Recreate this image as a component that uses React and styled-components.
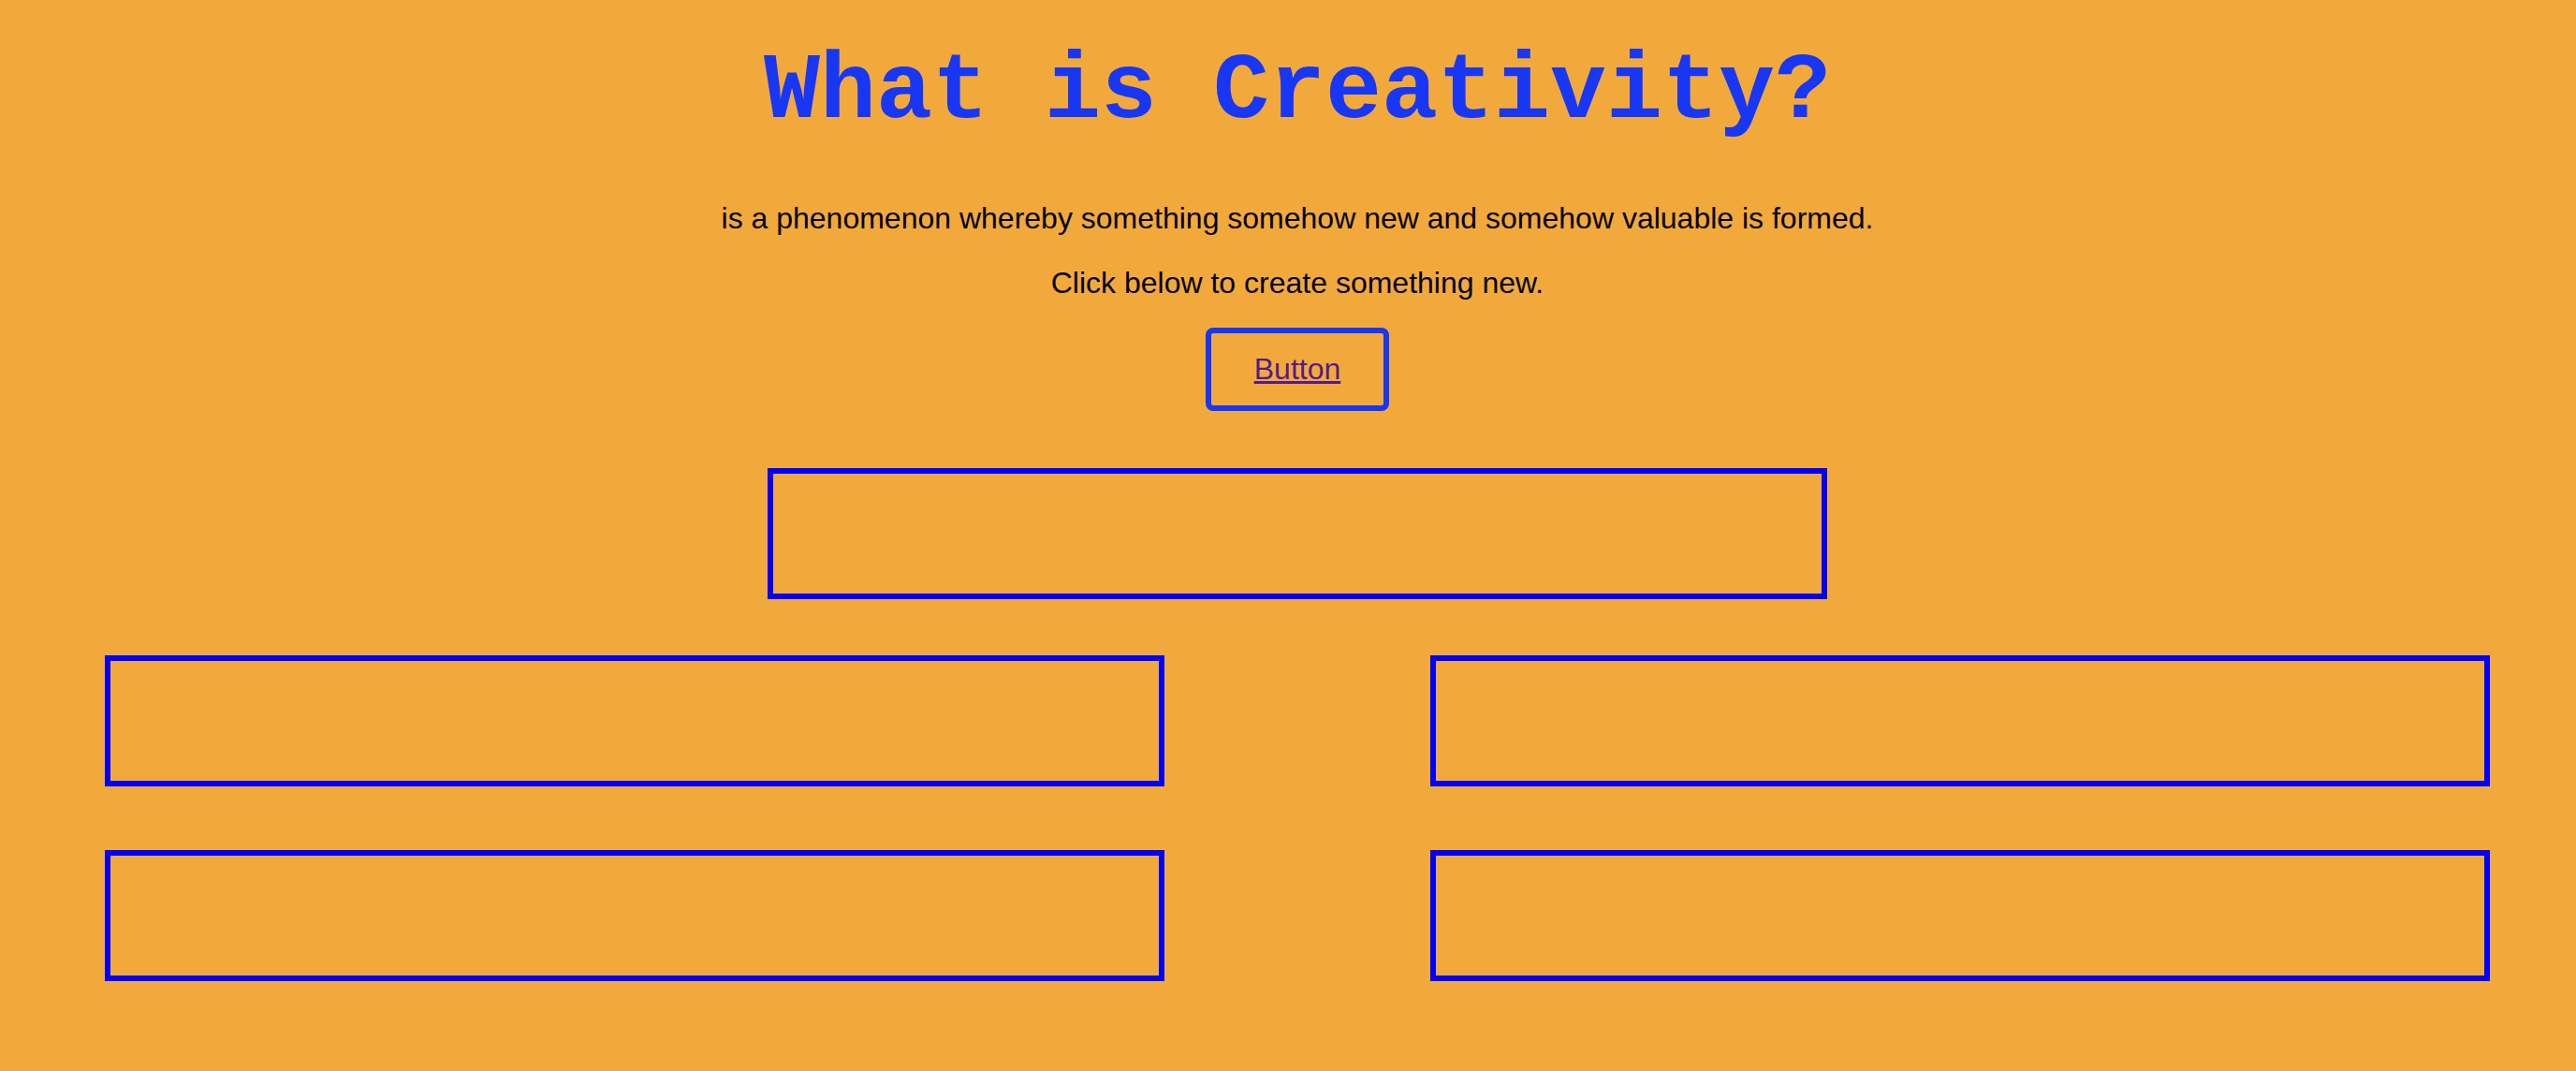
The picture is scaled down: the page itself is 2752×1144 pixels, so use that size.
import React from 'react';
import styled, { createGlobalStyle } from 'styled-components';

const GlobalStyle = createGlobalStyle`
  html, body {
    margin: 0;
    padding: 0;
    background-color: #f2a93c;
  }
`

const Page = styled.div`
  min-height: 1144px;
  background-color: #f2a93c;
  padding-left: 20px;
  box-sizing: border-box;
  text-align: center;
  font-family: "Liberation Sans", Arial, sans-serif;
`

const Title = styled.h1`
  margin: 42px 0 0;
  font-family: "Liberation Mono", "Courier New", monospace;
  font-weight: bold;
  font-size: 100px;
  line-height: 113px;
  color: #1737f5;
`

const Text = styled.p`
  margin: ${props => props.first ? '60px' : '32px'} 0 0;
  font-size: 32px;
  line-height: 37px;
  color: #000;
`

const ButtonLink = styled.a`
  display: inline-block;
  margin-top: 29px;
  padding: 20px 46px;
  border: 6px solid #1737f5;
  border-radius: 8px;
  font-size: 32px;
  line-height: 37px;
  color: #551a8b;
  text-decoration: underline;
  cursor: pointer;
`

const Box = styled.div`
  box-sizing: border-box;
  width: 1132px;
  height: 140px;
  border: 6px solid #0000ff;
`

const TopBox = styled(Box)`
  margin: 61px auto 0;
`

const Grid = styled.div`
  display: grid;
  grid-template-columns: 1132px 1132px;
  column-gap: 284px;
  row-gap: 68px;
  justify-content: center;
  margin-top: 60px;
`

const App = () => {
  return (<>
    <GlobalStyle />
    <Page>
      <Title>What is Creativity?</Title>
      <Text first>is a phenomenon whereby something somehow new and somehow valuable is formed.</Text>
      <Text>Click below to create something new.</Text>
      <ButtonLink href="#">Button</ButtonLink>
      <TopBox />
      <Grid>
        <Box />
        <Box />
        <Box />
        <Box />
      </Grid>
    </Page>
  </>);
}

export default App;
